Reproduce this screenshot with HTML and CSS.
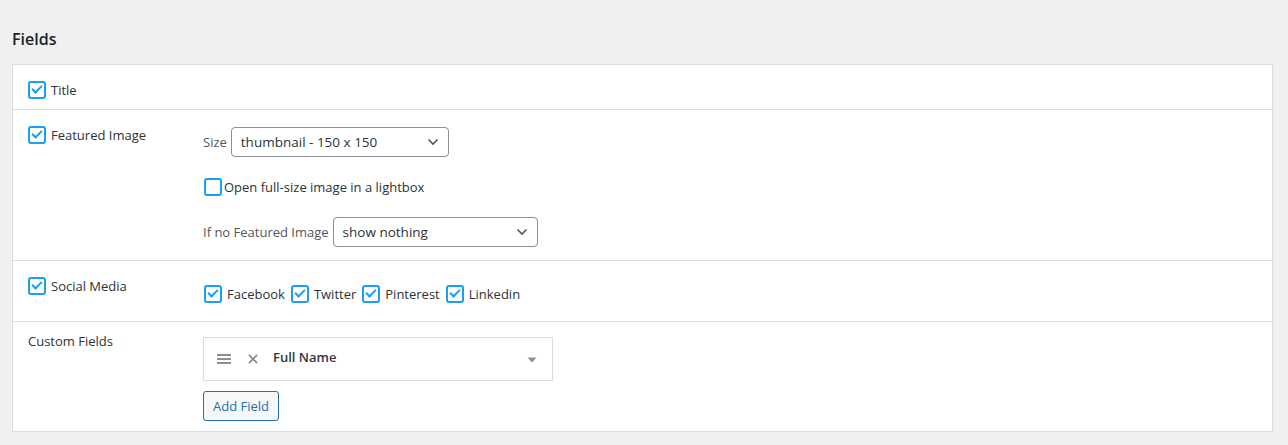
FILE: index.html
```html
<!DOCTYPE html>
<html lang="en">
<head>
    <meta charset="UTF-8">
    <title>Fields</title>
    <link rel="stylesheet" href="styles.css">
</head>
<body>

<div class="wrap">
    <h2 class="title">Fields</h2>

    <div class="fields">
        <div class="row row-title">
            <label class="check"><span class="box on"></span>Title</label>
            <div></div>
        </div>

        <div class="row row-image">
            <label class="check"><span class="box on"></span>Featured Image</label>
            <div class="options">
                <div class="line">
                    <span class="opt-label">Size</span>
                    <div class="select size">
                        <span>thumbnail - 150 x 150</span>
                        <svg width="12" height="8" viewBox="0 0 12 8"><path d="M1.5 1.5 L6 6 L10.5 1.5" fill="none" stroke="#50575e" stroke-width="1.6"/></svg>
                    </div>
                </div>
                <label class="check line-check"><span class="box"></span>Open full-size image in a lightbox</label>
                <div class="line">
                    <span class="opt-label">If no Featured Image</span>
                    <div class="select fallback">
                        <span>show nothing</span>
                        <svg width="12" height="8" viewBox="0 0 12 8"><path d="M1.5 1.5 L6 6 L10.5 1.5" fill="none" stroke="#50575e" stroke-width="1.6"/></svg>
                    </div>
                </div>
            </div>
        </div>

        <div class="row row-social">
            <label class="check"><span class="box on"></span>Social Media</label>
            <div class="socials">
                <label class="check"><span class="box on"></span>Facebook</label>
                <label class="check"><span class="box on"></span>Twitter</label>
                <label class="check"><span class="box on"></span>Pinterest</label>
                <label class="check"><span class="box on"></span>Linkedin</label>
            </div>
        </div>

        <div class="row row-custom">
            <div class="plain-label">Custom Fields</div>
            <div class="custom">
                <div class="custom-item">
                    <svg class="drag" width="14" height="10" viewBox="0 0 14 10"><path d="M0 1h14M0 5h14M0 9h14" stroke="#8c8f94" stroke-width="2"/></svg>
                    <svg class="remove" width="10" height="10" viewBox="0 0 10 10"><path d="M1 1 L9 9 M9 1 L1 9" stroke="#8c8f94" stroke-width="1.8"/></svg>
                    <strong class="field-name">Full Name</strong>
                    <svg class="toggle" width="10" height="6" viewBox="0 0 10 6"><path d="M0.5 0.5 H9.5 L5 5.5 Z" fill="#8c8f94"/></svg>
                </div>
                <button class="button" type="button">Add Field</button>
            </div>
        </div>
    </div>
</div>

</body>
</html>
```

FILE: styles.css
```css
body {
    font-family: "Open Sans", "Noto Sans", sans-serif;
    font-size: 13px;
    color: #3c434a;
    background-color: #f0f0f1;
    margin: 0;
    padding: 0;
}
.wrap {
    padding: 0 15px 0 12px;
}
.title {
    font-size: 16px;
    font-weight: 600;
    color: #1d2327;
    margin: 0;
    padding: 29px 0 14px;
    line-height: 21px;
}
.fields {
    background-color: white;
    border: 1px solid #dcdcde;
}
.row {
    display: grid;
    grid-template-columns: 175px 1fr;
    align-items: start;
    padding: 16px 15px 10px;
    border-top: 1px solid #dcdcde;
}
.row:first-child {
    border-top: none;
}
.check {
    display: flex;
    align-items: center;
    gap: 5px;
    line-height: 18px;
    color: #2c3338;
    cursor: pointer;
}
.box {
    width: 14px;
    height: 14px;
    border: 2px solid #1d9ff0;
    border-radius: 3px;
    flex: none;
    position: relative;
}
.box.on::after {
    content: "";
    position: absolute;
    left: 4px;
    top: 0px;
    width: 4px;
    height: 8px;
    border: solid #1d9ff0;
    border-width: 0 2px 2px 0;
    transform: rotate(45deg);
}
.options {
    display: flex;
    flex-direction: column;
    gap: 21px;
    padding-top: 1px;
}
.line {
    display: flex;
    align-items: center;
    gap: 4px;
}
.opt-label {
    color: #50575e;
}
.line-check {
    gap: 2px;
    padding-left: 1px;
}
.select {
    box-sizing: border-box;
    height: 30px;
    border: 1px solid #8c8f94;
    border-radius: 4px;
    display: flex;
    align-items: center;
    justify-content: space-between;
    padding: 0 9px 0 9px;
    font-size: 13.5px;
    color: #2c3338;
    background: white;
}
.select.size { width: 218px; }
.select.fallback { width: 205px; }
.row-image {
    padding-bottom: 13px;
}
.socials {
    display: flex;
    gap: 6px;
    padding-top: 8px;
    padding-left: 1px;
}
.socials .check {
    gap: 5px;
}
.row-social {
    padding-bottom: 18px;
}
.row-custom {
    padding-top: 10px;
}
.plain-label {
    line-height: 18px;
    color: #2c3338;
}
.custom {
    display: flex;
    flex-direction: column;
    align-items: flex-start;
    gap: 10px;
    padding-top: 5px;
}
.custom-item {
    box-sizing: border-box;
    width: 350px;
    height: 44px;
    border: 1px solid #dcdcde;
    display: flex;
    align-items: center;
    padding: 0 15px 0 13px;
}
.drag { margin-right: 17px; }
.remove { margin-right: 15px; }
.field-name {
    font-weight: 600;
    color: #32373c;
    flex: 1;
    margin-top: -4px;
}
.toggle { margin-top: 2px; }
.button {
    font-family: inherit;
    font-size: 13px;
    color: #2271b1;
    background-color: #f6f7f7;
    border: 1px solid #2271b1;
    border-radius: 3px;
    height: 30px;
    padding: 0 9px;
    cursor: pointer;
}
```
